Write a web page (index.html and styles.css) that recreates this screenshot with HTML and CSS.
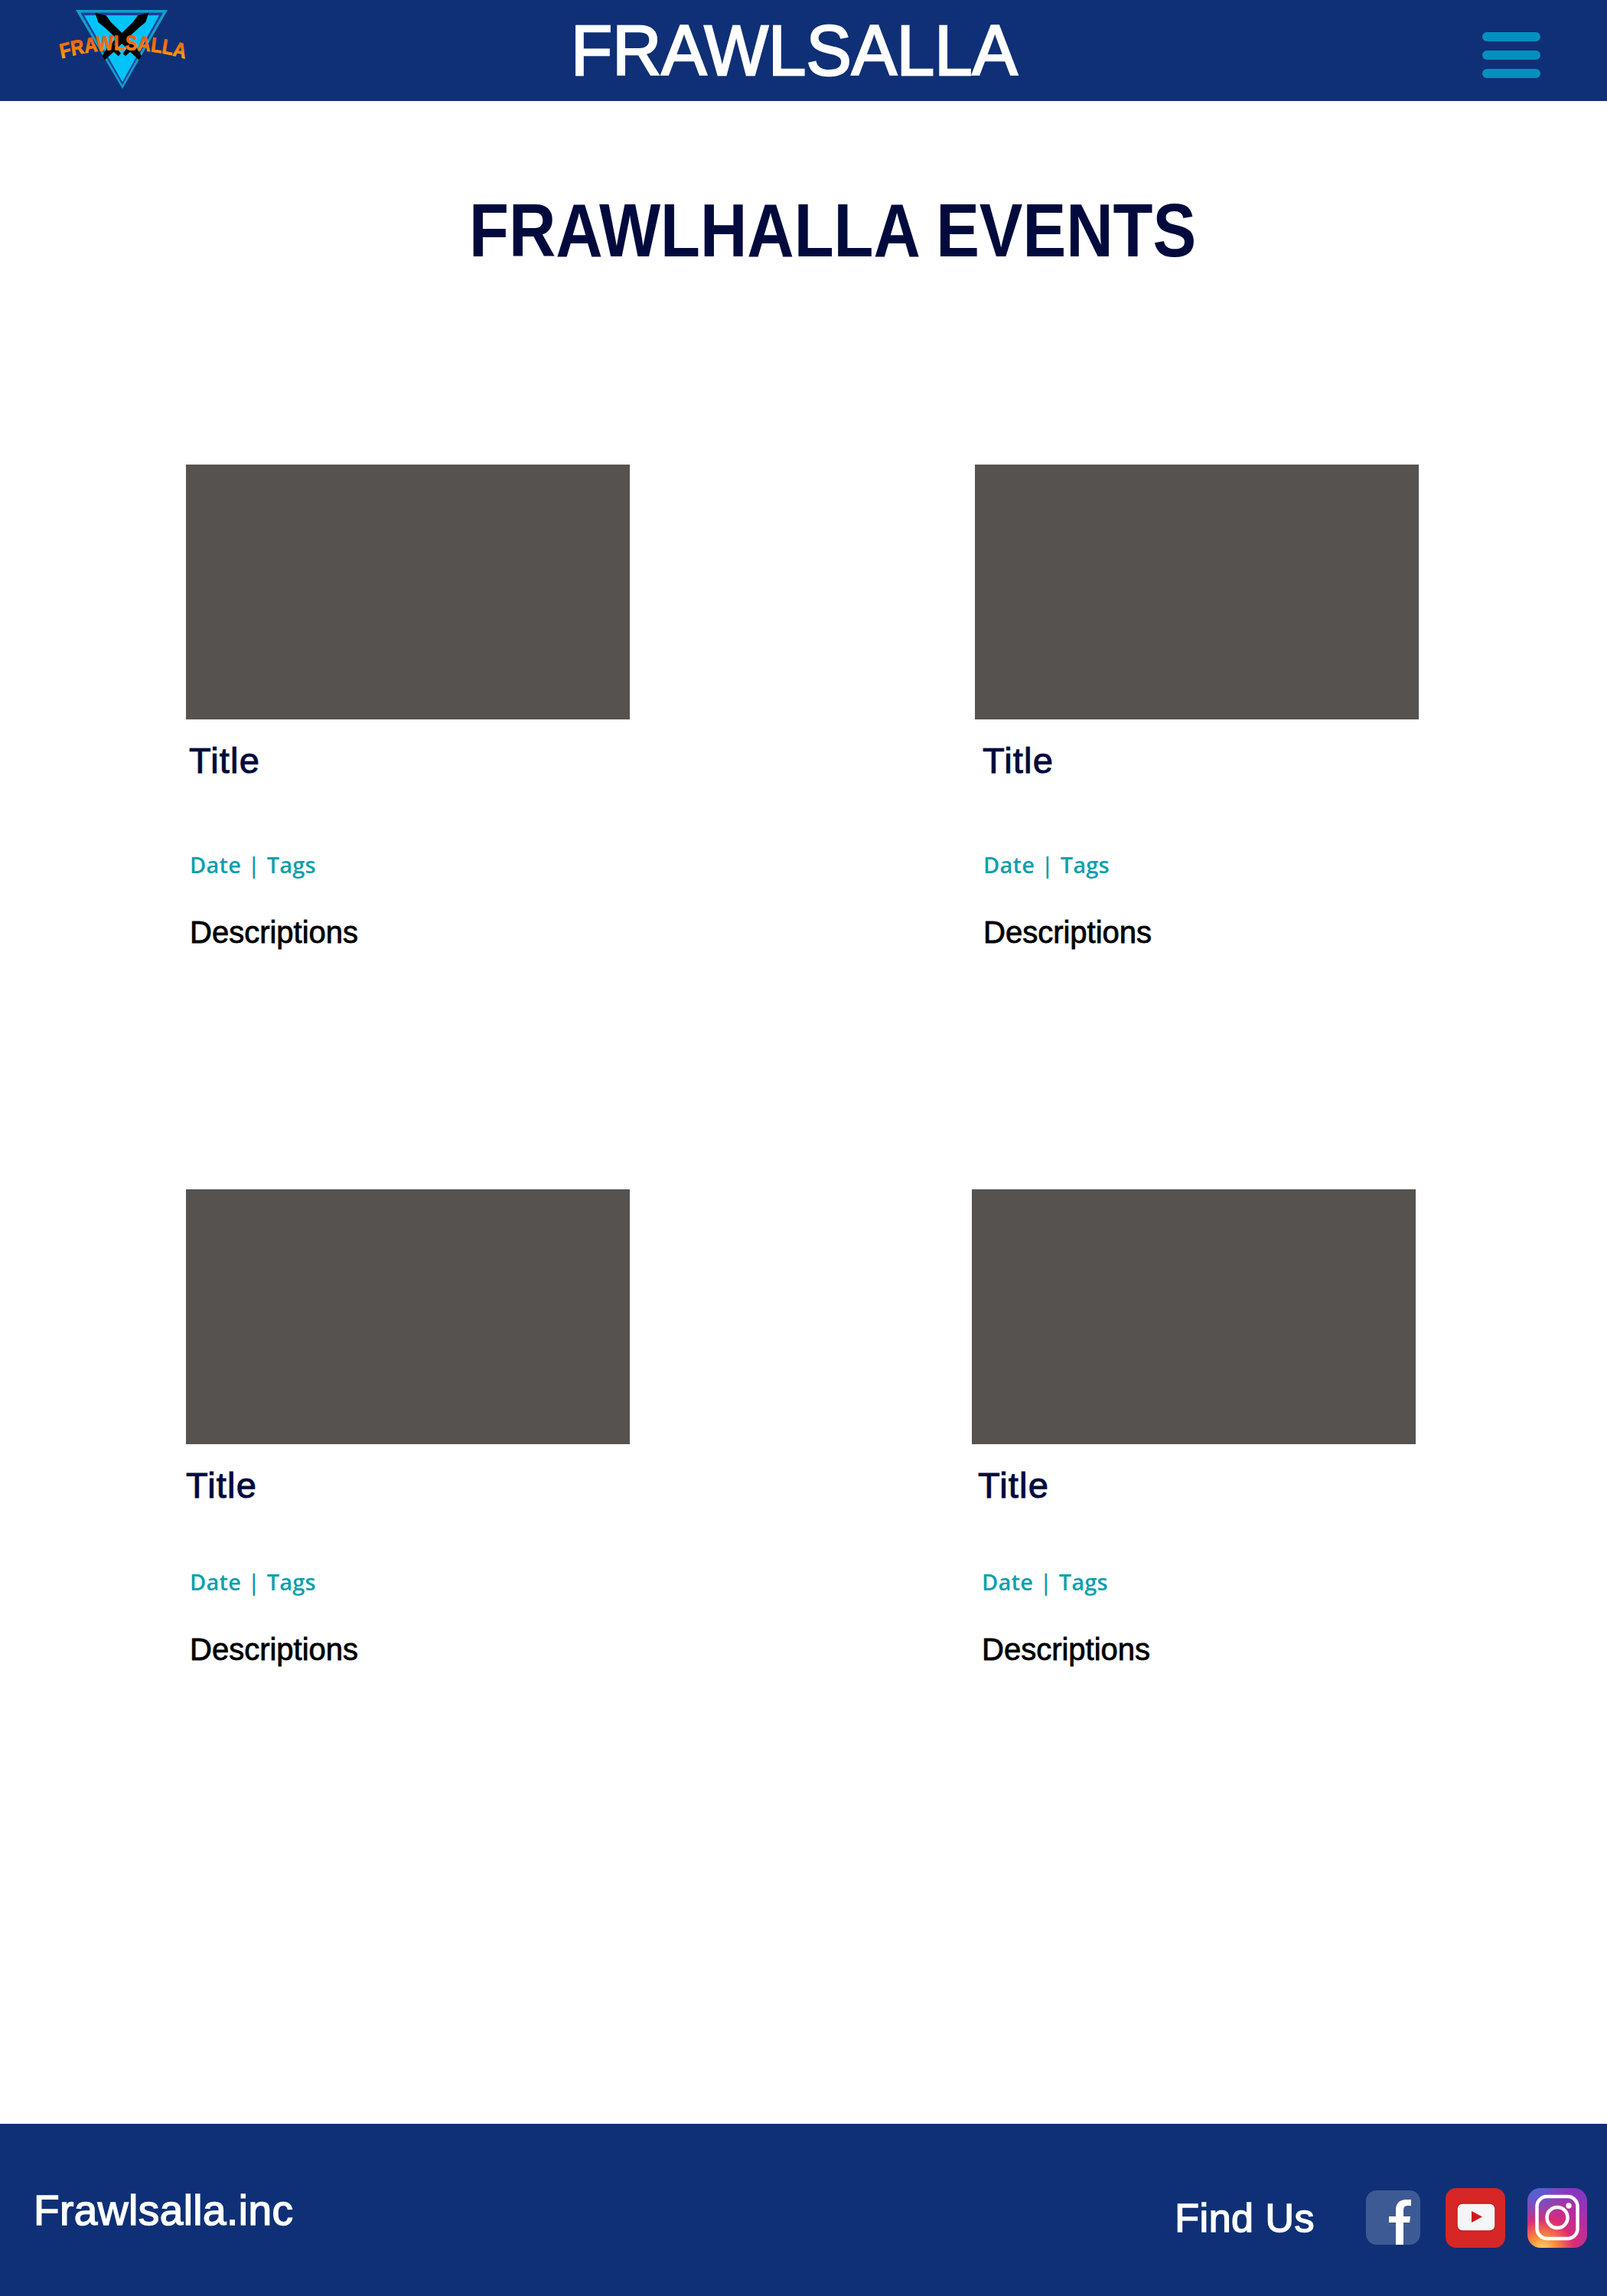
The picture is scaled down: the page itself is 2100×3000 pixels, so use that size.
FILE: index.html
```html
<!DOCTYPE html>
<html lang="en">
<head>
<meta charset="utf-8">
<title>Frawlsalla Events</title>
<link rel="stylesheet" href="styles.css">
</head>
<body>
<header class="site-header">
  <svg class="logo" viewBox="0 0 180 120" aria-label="Frawlsalla logo">
    <defs>
      <linearGradient id="logoText" x1="0" y1="0" x2="0" y2="1">
        <stop offset="0" stop-color="#ee4a08"/>
        <stop offset="0.6" stop-color="#f6800c"/>
        <stop offset="1" stop-color="#fdc21d"/>
      </linearGradient>
      <path id="logoArc" d="M-12 79 Q88 51 190 79"/>
    </defs>
    <polygon points="27,13 147,13 88,116" fill="#12a0c6"/>
    <polygon points="33,16.5 141,16.5 88,111" fill="#1a3fa0"/>
    <polygon points="38,20 136,20 88,107" fill="#00c4f8"/>
    <g transform="translate(-2 5) scale(.3333)">
      <path d="M163 35 L206 46 L225 72 L305 150 L285 172 L200 92 L175 72 Z"/>
      <path d="M322 165 L345 205 L335 220 L300 188 L282 205 L272 195 L305 150 Z"/>
      <path d="M373 35 L330 46 L311 72 L231 150 L251 172 L336 92 L361 72 Z"/>
      <path d="M214 165 L191 205 L201 220 L236 188 L254 205 L264 195 L231 150 Z"/>
    </g>
    <text class="logo-text" transform="translate(10.56 0) scale(.88 1)" fill="url(#logoText)" stroke="url(#logoText)" stroke-width="0.8"><textPath href="#logoArc" startOffset="50%" text-anchor="middle">FRAWLSALLA</textPath></text>
  </svg>
  <h1 class="brand">FRAWLSALLA</h1>
  <button class="menu" type="button" aria-label="Menu"><span></span><span></span><span></span></button>
</header>

<main class="events">
  <h2 class="events-title">FRAWLHALLA EVENTS</h2>
  <div class="event-grid">
    <article class="event">
      <div class="thumb"></div>
      <h3 class="event-name">Title</h3>
      <p class="event-meta">Date <span class="sep">|</span> Tags</p>
      <p class="event-desc">Descriptions</p>
    </article>
    <article class="event event-b">
      <div class="thumb"></div>
      <h3 class="event-name">Title</h3>
      <p class="event-meta">Date <span class="sep">|</span> Tags</p>
      <p class="event-desc">Descriptions</p>
    </article>
    <article class="event event-c">
      <div class="thumb"></div>
      <h3 class="event-name">Title</h3>
      <p class="event-meta">Date <span class="sep">|</span> Tags</p>
      <p class="event-desc">Descriptions</p>
    </article>
    <article class="event event-d">
      <div class="thumb"></div>
      <h3 class="event-name">Title</h3>
      <p class="event-meta">Date <span class="sep">|</span> Tags</p>
      <p class="event-desc">Descriptions</p>
    </article>
  </div>
</main>

<footer class="site-footer">
  <p class="company">Frawlsalla.inc</p>
  <div class="social">
    <span class="find">Find Us</span>
    <svg class="ico ico-fb" viewBox="0 0 71 71" aria-label="Facebook">
      <rect width="71" height="71" rx="14" fill="#3e5a94"/>
      <path d="M39 71 V42 H30 V34 H39 V26 Q39 12 53 12 H59 V20 H54 Q49 20 49 26 V34 H58 L57 42 H49 V71 Z" fill="#fff"/>
    </svg>
    <svg class="ico ico-yt" viewBox="0 0 78 78" aria-label="YouTube">
      <rect width="78" height="78" rx="14" fill="#d62626"/>
      <rect x="15" y="20" width="50" height="36" rx="7" fill="#f4f5f6" stroke="#c91c20" stroke-width="1.5"/>
      <polygon points="34,30 48,37.5 34,45" fill="#d2171d"/>
    </svg>
    <svg class="ico ico-ig" viewBox="0 0 78 78" aria-label="Instagram">
      <defs>
        <radialGradient id="igGlow" cx="0.25" cy="1.05" r="1.1">
          <stop offset="0" stop-color="#fedc7a"/>
          <stop offset="0.22" stop-color="#fb8d35"/>
          <stop offset="0.48" stop-color="#dd2b74"/>
          <stop offset="0.75" stop-color="#b22fa0"/>
          <stop offset="1" stop-color="#8a35c0"/>
        </radialGradient>
        <radialGradient id="igBlue" cx="0.1" cy="0" r="0.6">
          <stop offset="0" stop-color="#4a68d8"/>
          <stop offset="1" stop-color="#4a68d8" stop-opacity="0"/>
        </radialGradient>
      </defs>
      <rect width="78" height="78" rx="17" fill="url(#igGlow)"/>
      <rect width="78" height="78" rx="17" fill="url(#igBlue)"/>
      <rect x="12.5" y="11" width="53" height="55" rx="13" fill="none" stroke="#fff" stroke-width="4.5"/>
      <circle cx="39" cy="38.5" r="13.5" fill="none" stroke="#fff" stroke-width="4.5"/>
      <circle cx="54" cy="23" r="3.7" fill="#fff"/>
    </svg>
  </div>
</footer>
</body>
</html>
```
FILE: styles.css
```css
* { box-sizing: border-box; }
html, body { margin: 0; padding: 0; }
body {
  width: 2100px;
  height: 3000px;
  display: flex;
  flex-direction: column;
  background: #fff;
  font-family: "Liberation Sans", Arial, sans-serif;
}
.site-header {
  height: 132px;
  flex: none;
  background: #0f3076;
  display: flex;
  align-items: flex-start;
  padding-left: 72px;
  padding-right: 87px;
}
.logo { width: 180px; height: 120px; flex: none; }
.logo-text {
  font-family: "Liberation Sans", sans-serif;
  font-weight: 700;
  font-size: 27px;
}
.brand {
  margin: 0 0 0 494px;
  color: #fff;
  font-size: 92px;
  font-weight: 400;
  line-height: 132px;
  -webkit-text-stroke: 2.5px #fff;
  transform: scaleX(.965);
  transform-origin: 0 0;
}
.menu {
  margin: 42px 0 0 auto;
  padding: 0;
  width: 76px;
  border: 0;
  background: none;
  display: flex;
  flex-direction: column;
  gap: 12px;
}
.menu span { display: block; height: 12px; border-radius: 6px; background: #0490be; }
.events { flex: 1; }
.events-title {
  margin: 0;
  padding: 114px 0 2px 613px;
  color: #000a3c;
  font-size: 99px;
  font-weight: 700;
  line-height: 110px;
  white-space: nowrap;
  transform: scaleX(.858);
  transform-origin: 613px 0;
}
.event-grid {
  display: grid;
  grid-template-columns: 580px 580px;
  column-gap: 451px;
  grid-auto-rows: 947px;
  padding: 249px 0 0 243px;
}
.event { display: flex; flex-direction: column; align-items: flex-start; }
.thumb { width: 580px; height: 333px; background: #565250; }
.event-name {
  margin: 28px 0 0 4px;
  color: #000a3c;
  font-size: 47px;
  font-weight: 400;
  line-height: 52px;
  letter-spacing: 1.2px;
  -webkit-text-stroke: 1px #000a3c;
}
.event-meta {
  margin: 92px 0 0 5px;
  color: #0aa0ac;
  font-family: "Open Sans", "Liberation Sans", sans-serif;
  font-size: 29px;
  font-weight: 600;
  line-height: 36px;
  letter-spacing: .2px;
}
.sep { margin: 0 1px; }
.event-desc {
  margin: 47px 0 0 5px;
  color: #000;
  font-size: 40px;
  line-height: 46px;
  -webkit-text-stroke: .8px #000;
}
.event-b .event-name { margin-left: 10px; }
.event-b .event-meta,
.event-b .event-desc { margin-left: 11px; }
.event-c .event-name { margin-left: 0; }
.event-c .event-meta { margin-top: 82px; }
.event-c .event-desc { margin-top: 47px; }
.event-d { margin-left: -4px; }
.event-d .event-name { margin-left: 8px; }
.event-d .event-meta { margin-top: 82px; margin-left: 13px; }
.event-d .event-desc { margin-top: 47px; margin-left: 13px; }
.site-footer {
  height: 225px;
  flex: none;
  background: #0f3076;
  color: #fff;
  display: flex;
  align-items: flex-start;
  justify-content: space-between;
  padding: 0 26px 0 44px;
}
.company {
  margin: 81px 0 0;
  font-size: 55px;
  line-height: 64px;
  letter-spacing: .45px;
  -webkit-text-stroke: 1.5px #fff;
}
.social { display: flex; align-items: flex-start; margin-top: 84px; }
.find {
  font-size: 52px;
  line-height: 60px;
  letter-spacing: .5px;
  -webkit-text-stroke: 1.5px #fff;
  margin: 9px 67px 0 0;
}
.ico { display: block; flex: none; }
.ico-fb { width: 71px; height: 71px; margin-top: 3px; }
.ico-yt { width: 78px; height: 78px; margin-left: 33px; }
.ico-ig { width: 78px; height: 78px; margin-left: 29px; }
```
